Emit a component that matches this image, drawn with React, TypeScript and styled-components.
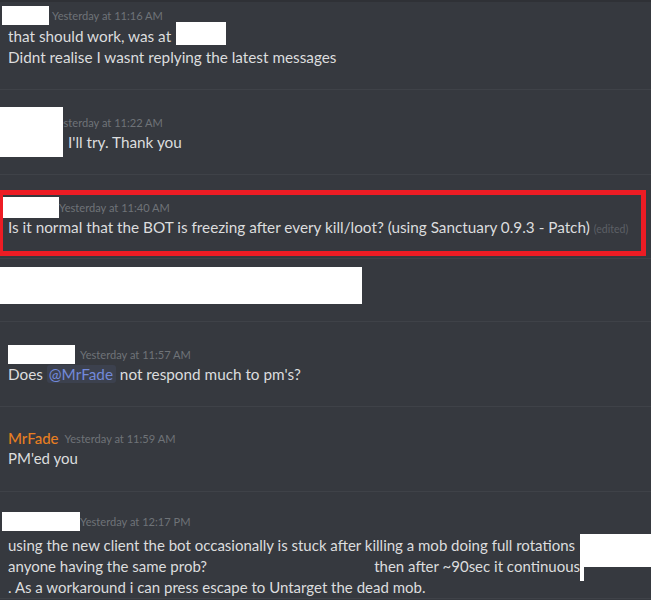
import React from "react";
import styled, { createGlobalStyle } from "styled-components";

const GlobalStyle = createGlobalStyle`
  html, body {
    margin: 0;
    padding: 0;
    background: #36393f;
  }
  body {
    font-family: Lato, "Liberation Sans", sans-serif;
    overflow: hidden;
  }
`;

const Chat = styled.div`
  width: 651px;
  height: 600px;
  background: #36393f;
  overflow: hidden;
  display: flex;
  flex-direction: column;
  color: #dcddde;
`;

// one message group, separated from the previous one by a thin line
const Group = styled.div<{ $h: number; $pt: number; $first?: boolean }>`
  position: relative;
  flex: none;
  box-sizing: border-box;
  height: ${(p) => p.$h}px;
  padding-top: ${(p) => p.$pt}px;
  border-top: ${(p) => (p.$first ? "2px solid #2f3136" : "1px solid #3f4248")};
  display: flex;
  flex-direction: column;
`;

const Header = styled.div<{ $indent: number }>`
  display: flex;
  align-items: center;
  height: 20px;
  padding-left: ${(p) => p.$indent}px;
  white-space: nowrap;
`;

const NameMask = styled.span<{ $w: number; $h?: number }>`
  display: block;
  flex: none;
  width: ${(p) => p.$w}px;
  height: ${(p) => p.$h ?? 20}px;
  background: #fff;
`;

const Username = styled.span<{ $color: string }>`
  font-size: 15px;
  font-weight: 500;
  color: ${(p) => p.$color};
`;

const Timestamp = styled.span<{ $gap: number }>`
  margin-left: ${(p) => p.$gap}px;
  font-size: 11.1px;
  color: #6f7378;
`;

const Body = styled.div<{ $indent: number; $gap?: number; $size?: number }>`
  padding-left: ${(p) => p.$indent}px;
  margin-top: ${(p) => p.$gap ?? 0}px;
  font-size: ${(p) => p.$size ?? 15.3}px;
  line-height: 21px;
  white-space: nowrap;
`;

const SplitLine = styled.div<{ $w: number }>`
  display: flex;
  justify-content: space-between;
  width: ${(p) => p.$w}px;
`;

const Mention = styled.span`
  color: #7289da;
  background: rgba(114, 137, 218, 0.1);
  padding: 0 3px 0 2px;
  border-radius: 3px;
`;

const Edited = styled.span`
  margin-left: 4px;
  font-size: 10.5px;
  color: #5d6066;
`;

// the white redaction boxes lying over names and text
const Redact = styled.div<{ $x: number; $y: number; $w: number; $h: number }>`
  position: absolute;
  left: ${(p) => p.$x}px;
  top: ${(p) => p.$y}px;
  width: ${(p) => p.$w}px;
  height: ${(p) => p.$h}px;
  background: #fff;
`;

const Blanked = styled.div<{ $w: number; $h: number }>`
  width: ${(p) => p.$w}px;
  height: ${(p) => p.$h}px;
  background: #fff;
`;

const Highlight = styled.div`
  box-sizing: border-box;
  width: 648px;
  margin: 15px 0 0 -2px;
  padding: 2px 0 11px;
  border: 5px solid #ed1c24;
`;

export default function App() {
  return (
    <>
      <GlobalStyle />
      <Chat>
        <Group $first $h={89} $pt={3}>
          <Header $indent={2}>
            <NameMask $w={47} $h={19} />
            <Timestamp $gap={3}>Yesterday at 11:16 AM</Timestamp>
          </Header>
          <Body $indent={8} $gap={1}>
            <div>that should work, was at</div>
            <div>Didnt realise I wasnt replying the latest messages</div>
          </Body>
          <Redact $x={176} $y={20} $w={50} $h={23} />
        </Group>

        <Group $h={85} $pt={22}>
          <Header $indent={52}>
            <Timestamp $gap={0}>Yesterday at 11:22 AM</Timestamp>
          </Header>
          <Body $indent={68}>I'll try. Thank you</Body>
          <Redact $x={0} $y={17} $w={63} $h={50} />
        </Group>

        <Group $h={84} $pt={0}>
          <Highlight>
            <Header $indent={0}>
              <NameMask $w={56} $h={21} />
              <Timestamp $gap={0}>Yesterday at 11:40 AM</Timestamp>
            </Header>
            <Body $indent={5}>
              Is it normal that the BOT is freezing after every kill/loot? (using Sanctuary 0.9.3 - Patch)
              <Edited>(edited)</Edited>
            </Body>
          </Highlight>
        </Group>

        <Group $h={63} $pt={8}>
          <Blanked $w={362} $h={37} />
        </Group>

        <Group $h={85} $pt={22}>
          <Header $indent={8}>
            <NameMask $w={67} $h={19} />
            <Timestamp $gap={5}>Yesterday at 11:57 AM</Timestamp>
          </Header>
          <Body $indent={8}>
            Does <Mention>@MrFade</Mention> not respond much to pm's?
          </Body>
        </Group>

        <Group $h={85} $pt={21}>
          <Header $indent={8}>
            <Username $color="#e67e22">MrFade</Username>
            <Timestamp $gap={6}>Yesterday at 11:59 AM</Timestamp>
          </Header>
          <Body $indent={8} $size={15}>PM'ed you</Body>
        </Group>

        <Group $h={107} $pt={19}>
          <Header $indent={2}>
            <NameMask $w={78} $h={19} />
            <Timestamp $gap={0}>Yesterday at 12:17 PM</Timestamp>
          </Header>
          <Body $indent={8} $gap={4} $size={15}>
            <div>using the new client the bot occasionally is stuck after killing a mob doing full rotations</div>
            <SplitLine $w={572}>
              <span>anyone having the same prob?</span>
              <span>then after ~90sec it continuous</span>
            </SplitLine>
            <div>. As a workaround i can press escape to Untarget the dead mob.</div>
          </Body>
          <Redact $x={580} $y={42} $w={71} $h={33} />
          <Redact $x={580} $y={74} $w={4} $h={15} />
        </Group>

        <Group $h={20} $pt={0} />
      </Chat>
    </>
  );
}
